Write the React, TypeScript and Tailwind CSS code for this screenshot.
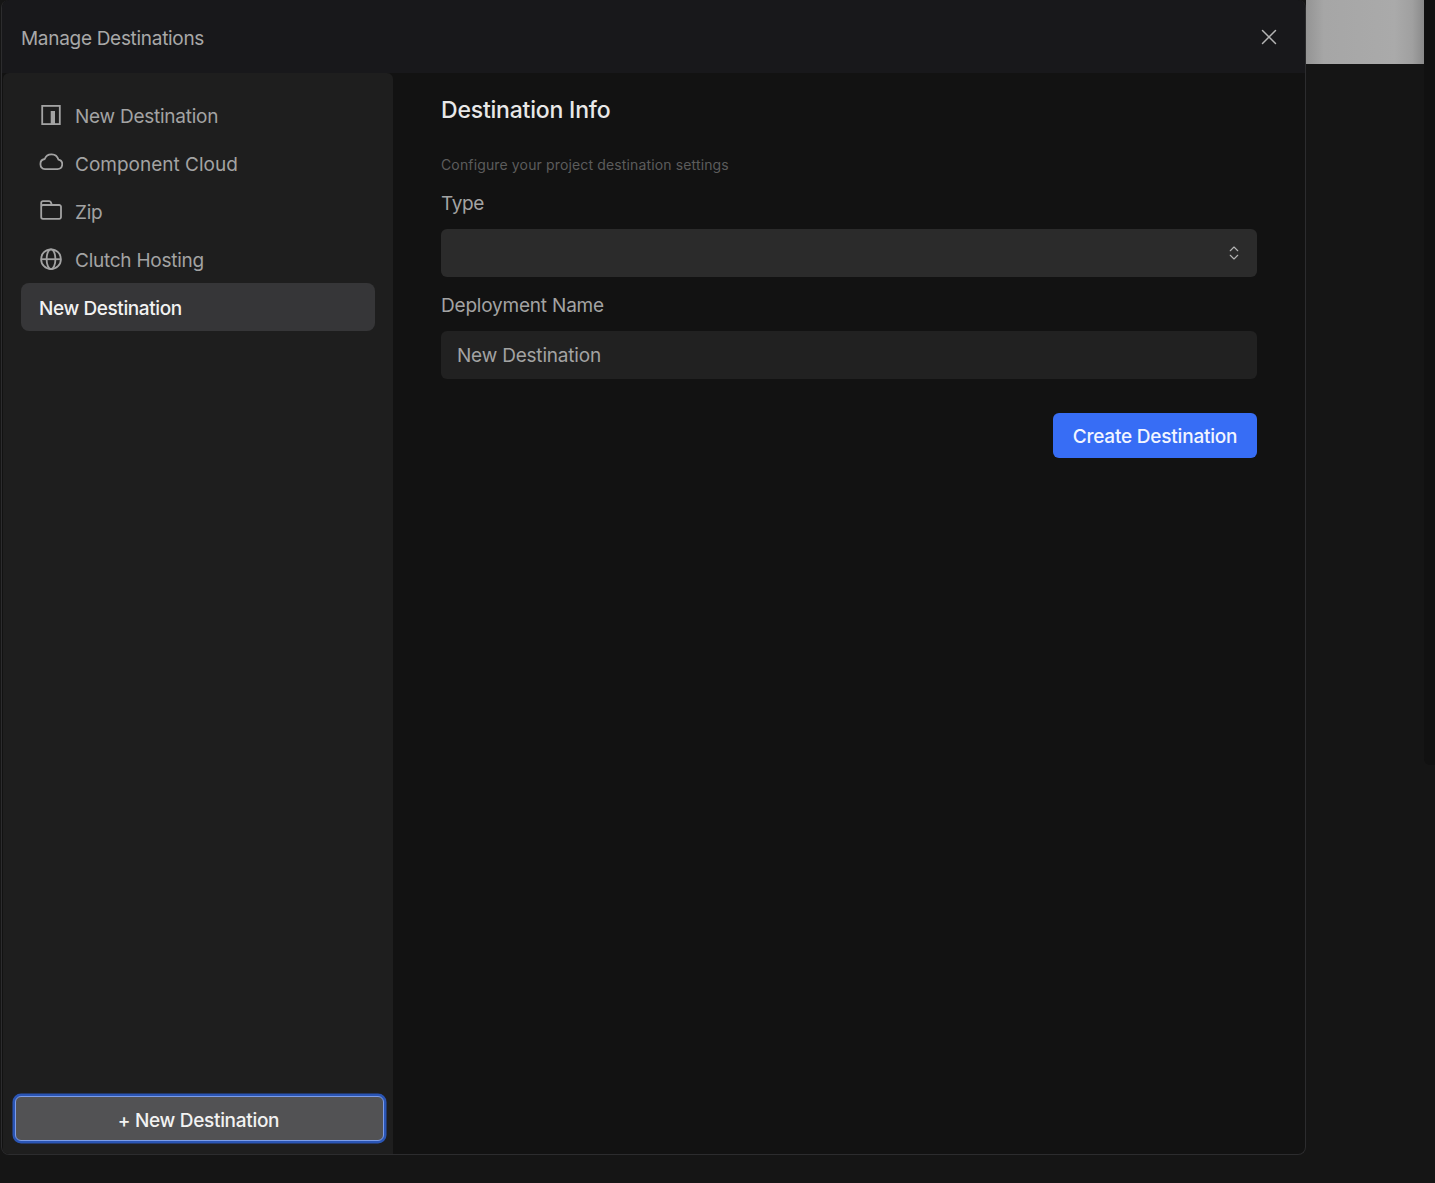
import { ChevronsUpDown, X } from "lucide-react";

const items = [
  { label: "New Destination", icon: "panel", tracking: "tracking-[-0.25px]" },
  { label: "Component Cloud", icon: "cloud", tracking: "tracking-[0px]" },
  { label: "Zip", icon: "folder", tracking: "tracking-[-0.25px]" },
  { label: "Clutch Hosting", icon: "globe", tracking: "tracking-[-0.25px]" },
];

function ItemIcon({ name }: { name: string }) {
  return (
    <svg width="24" height="24" viewBox="0 0 24 24" fill="none" stroke="currentColor" strokeWidth="1.8" className="shrink-0">
      {name === "panel" && (
        <>
          <rect x="3.2" y="2.9" width="17.6" height="18.2" />
          <path d="M11.7 21V8h4.3v13z" fill="currentColor" stroke="none" />
        </>
      )}
      {name === "cloud" && (
        <path d="M6 18.1h12.5a4.8 4.8 0 0 0 .9-9.5 7.2 7.2 0 0 0-13.7-.6 5.1 5.1 0 0 0 .3 10.1z" strokeLinejoin="round" />
      )}
      {name === "folder" && (
        <path d="M2.2 7.5V4a1.8 1.8 0 0 1 1.8-1.8h6.2a1.8 1.8 0 0 1 1.6 1l1.1 2.8h7.3a1.8 1.8 0 0 1 1.8 1.8V18a1.8 1.8 0 0 1-1.8 1.8H4A1.8 1.8 0 0 1 2.2 18V7.5c0-1.4.8-1.5 1.8-1.5h9" strokeLinejoin="round" />
      )}
      {name === "globe" && (
        <>
          <circle cx="12" cy="12.2" r="9.9" />
          <ellipse cx="12" cy="12.2" rx="4.4" ry="9.9" />
          <path d="M2.1 12.2h19.8" />
        </>
      )}
    </svg>
  );
}

export default function App() {
  return (
    <div className="relative h-[1183px] w-[1435px] overflow-hidden bg-[#151515] font-['Inter',sans-serif]">
      {/* app behind the modal */}
      <div className="flex h-[64px] justify-end">
        <div className="h-full w-[118px] bg-[linear-gradient(90deg,#949494_0%,#a6a6a6_15%,#aaaaaa_75%,#a0a0a0_90%,#8a8a8a_100%)]" />
        <div className="h-full w-[11px] bg-[#111111]" />
      </div>
      <div className="absolute right-0 top-[64px] h-[701px] w-[11px] rounded-bl-md bg-[#111111]" />

      <div className="absolute left-[1px] top-0 flex h-[1155px] w-[1305px] flex-col overflow-hidden rounded-lg border border-[#2c2c2e] border-t-0 bg-[#121212]">
        <div className="flex h-[73px] shrink-0 items-center justify-between bg-[#18181b] pl-[19px] pr-[23px]">
          <span className="pt-[6px] text-[19px] tracking-[-0.3px] text-[#a8a8a8]">Manage Destinations</span>
          <X className="h-[26px] w-[26px] text-[#b4b4b4]" strokeWidth={1.35} />
        </div>
        <div className="flex min-h-0 flex-1">
          <div className="ml-[1px] flex w-[390px] flex-col rounded-t-md bg-[#1e1e1e] pb-[13px] pt-[18px]">
            <div className="flex flex-1 flex-col px-[18px]">
              {items.map((item) => (
                <div key={item.label} className="flex h-[48px] items-center gap-[12px] pl-[18px] text-[#a3a3a3]">
                  <ItemIcon name={item.icon} />
                  <span className={`pt-[4px] text-[19px] ${item.tracking}`}>{item.label}</span>
                </div>
              ))}
              <div className="flex h-[48px] items-center rounded-lg bg-[#363638] pl-[18px] pt-[4px] text-[19px] font-medium tracking-[-0.4px] text-[#f2f2f2]">
                New Destination
              </div>
            </div>
            <div className="pl-[12px] pr-[9px]">
              <button className="h-[45px] w-full rounded-md border border-[#7c9ce8] bg-[#525254] pr-[2px] pt-[6px] text-[19px] font-medium tracking-[-0.3px] text-[#f2f2f2] shadow-[0_0_0_2.5px_#2a55b5]">
                + New Destination
              </button>
            </div>
          </div>
          <div className="flex flex-1 flex-col px-[48px] pt-[20px]">
            <h2 className="text-[23px] font-medium leading-[34px] tracking-[-0.2px] text-[#e8e8e8]">Destination Info</h2>
            <p className="mt-[28px] text-[14px] leading-[20px] tracking-[0.14px] text-[#5c5c5c]">Configure your project destination settings</p>
            <label className="mt-[16px] text-[19px] leading-[26px] tracking-[-0.4px] text-[#a3a3a3]">Type</label>
            <div className="mt-[12px] flex h-[48px] items-center justify-end rounded-md bg-[#2b2b2b] pr-[14px] text-[#b4b4b4]">
              <ChevronsUpDown className="h-[18px] w-[18px]" strokeWidth={1.5} />
            </div>
            <label className="mt-[16px] text-[19px] leading-[26px] tracking-[-0.2px] text-[#a3a3a3]">Deployment Name</label>
            <div className="mt-[12px] flex h-[48px] items-center rounded-md bg-[#212121] pl-4 pt-[3px] text-[19px] tracking-[-0.2px] text-[#a3a3a3]">
              New Destination
            </div>
            <div className="mt-[34px] flex justify-end">
              <button className="h-[45px] w-[204px] rounded-md bg-[#376df5] pt-[4px] text-[19px] font-medium tracking-[-0.2px] text-[#f2f5ff]">
                Create Destination
              </button>
            </div>
          </div>
        </div>
      </div>
    </div>
  );
}
